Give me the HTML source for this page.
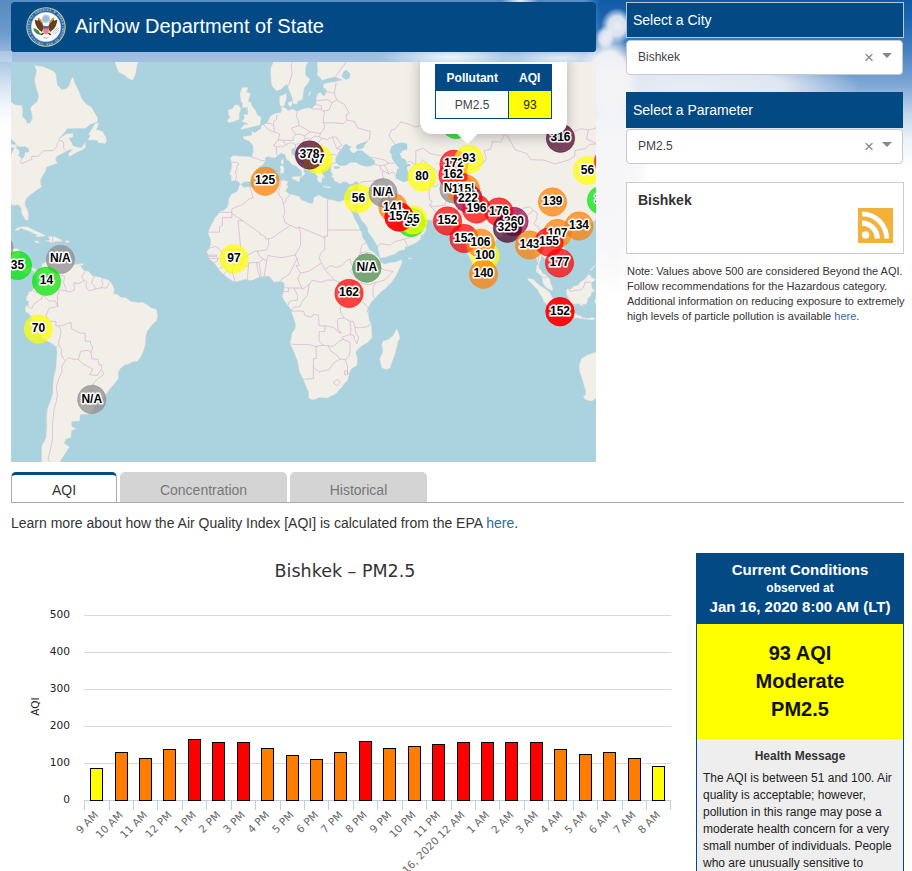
<!DOCTYPE html>
<html lang="en">
<head>
<meta charset="utf-8">
<title>AirNow Department of State</title>
<style>
*{box-sizing:border-box;margin:0;padding:0}
html,body{width:912px;height:871px;overflow:hidden;background:#fff}
body{position:relative;font-family:"Liberation Sans",Arial,sans-serif;color:#333;font-size:14px}
.abs{position:absolute}
#sky{left:0;top:0;width:912px;height:470px;
 background:
  radial-gradient(ellipse 16px 18px at 617px 26px,rgba(244,244,247,.95) 0,rgba(244,244,247,.85) 55%,rgba(244,244,247,0) 100%),
  radial-gradient(ellipse 10px 12px at 605px 38px,rgba(244,244,247,.95) 0,rgba(244,244,247,.8) 55%,rgba(244,244,247,0) 100%),
  radial-gradient(ellipse 30px 44px at 609px 78px,rgba(244,244,247,1) 0,rgba(244,244,247,.95) 60%,rgba(244,244,247,0) 100%),
  radial-gradient(ellipse 40px 120px at 611px 180px,rgba(246,246,248,1) 0,rgba(246,246,248,.9) 60%,rgba(246,246,248,0) 100%),
  radial-gradient(ellipse 170px 34px at 690px 86px,rgba(232,237,245,1) 0,rgba(232,237,245,.9) 55%,rgba(232,237,245,0) 100%),
  radial-gradient(ellipse 70px 12px at 450px 57px,rgba(255,255,255,.85),rgba(255,255,255,0)),
  radial-gradient(ellipse 60px 10px at 560px 58px,rgba(255,255,255,.7),rgba(255,255,255,0)),
  radial-gradient(ellipse 18px 5px at 520px 1px,rgba(255,255,255,.9),rgba(255,255,255,0)),
  linear-gradient(to bottom,rgba(255,255,255,0) 0,rgba(255,255,255,0) 35px,rgba(255,255,255,.75) 105px,#fff 135px) 0 0/12px 100% no-repeat,
  linear-gradient(rgba(255,255,255,.22),rgba(255,255,255,.22)) 0 51px/596px 11px no-repeat,
  linear-gradient(to right,rgba(255,255,255,.3) 0,rgba(255,255,255,.3) 585px,rgba(255,255,255,0) 600px),
  linear-gradient(to bottom,#105aa6 0,#1b65b0 18px,#4580c0 50px,#7fa8d6 85px,#c4d8ec 115px,#edf3f9 140px,#fff 170px);}
#hdr{left:11px;top:2px;width:585px;height:50px;background:#034a85;border-radius:4px 4px 3px 3px;color:#fff}
#hdr .t{left:64px;top:11px;font-size:20px;line-height:26px;white-space:nowrap}
#map{left:11px;top:62px;width:585px;height:400px;background:#aad3df;overflow:hidden}
.ph{left:626px;width:278px;height:36px;background:#034a85;color:#fff;font-size:14px;line-height:35px;padding-left:6px;border:1px solid #034a85}
.ph.f{border-color:rgba(255,255,255,.7)}
.sel{left:626px;width:277px;height:35px;background:#fff;border:1px solid #c8c8c8;border-radius:4px;font-size:12px;line-height:33px;padding-left:11px;color:#444}
.sel .x{position:absolute;left:237px;top:0;font-size:17px;color:#888;font-weight:normal}
.sel .c{position:absolute;left:255px;top:12px;width:0;height:0;border:5px solid transparent;border-top:5px solid #888;border-bottom:0}
#city{left:626px;top:182px;width:278px;height:72px;background:#fff;border:1px solid #ccc}
#city b{position:absolute;left:11px;top:9px;font-size:14px;color:#333}
#note{left:627px;top:264px;width:285px;font-size:11px;line-height:15px;color:#333;white-space:nowrap}
a{color:#2f6aa3;text-decoration:none}
.tab{top:472px;height:30px;font-size:14px;line-height:36px;text-align:center;border-radius:5px 5px 0 0}
#t1{left:11px;width:106px;background:#fff;border:1px solid #aaa;border-top:3px solid #034a85;border-bottom:0;color:#333;line-height:30px;height:31px}
#t2{left:120px;width:167px;background:#d4d4d4;color:#777}
#t3{left:290px;width:137px;background:#d4d4d4;color:#777}
#tline{left:11px;top:502px;width:893px;height:1px;background:#aaa}
#learn{left:11px;top:514px;font-size:14px;line-height:18px;color:#333;white-space:nowrap}
#cc{left:696px;top:553px;width:208px;height:330px;background:#eee;border:1px solid #034a85;border-bottom:0}
#cc .h{left:0;top:0;width:206px;height:70px;background:#034a85;color:#fff;text-align:center;font-weight:bold}
#cc .y{left:0;top:70px;width:206px;height:115px;background:#ff0;color:#111;text-align:center;font-weight:bold;font-size:20px;line-height:28px;padding-top:15px}
#cc .hm{left:0;top:194px;width:206px;text-align:center;font-weight:bold;font-size:12px;line-height:16px;color:#333}
#cc .p{left:6px;top:216px;width:200px;font-size:12px;line-height:17px;color:#222;white-space:nowrap}
#pop{left:409px;top:-12px;width:147px;height:84px;background:#fff;border-radius:12px;box-shadow:0 3px 14px rgba(0,0,0,.25)}
#pop .tip{left:40px;top:76px;width:15px;height:15px;background:#fff;transform:rotate(45deg);transform-origin:50% 50%}
#pop table{position:absolute;left:15px;top:13.8px;border:1px solid #034a85;border-collapse:collapse;font-size:12px;table-layout:fixed}
#pop th{background:#034a85;color:#fff;font-size:12px;height:27px;font-weight:bold;text-align:center;padding:0}
#pop td{height:27px;text-align:center;color:#444;padding:0}
</style>
</head>
<body>
<div id="sky" class="abs"></div>

<div id="hdr" class="abs">
<svg class="abs" style="left:15px;top:4.700px" width="40" height="40" viewBox="0 0 40 40">
<defs><path id="ringt" d="M20 36.300A16.300 16.300 0 1 1 20.010 36.300"/></defs>
<circle cx="20" cy="20" r="19.700" fill="#c9d78c"/>
<circle cx="20" cy="20" r="18.700" fill="#2c66b4"/>
<circle cx="20" cy="20" r="14.800" fill="#fff" stroke="#c9d78c" stroke-width=".5"/>
<text font-family="Liberation Sans,Arial,sans-serif" font-size="2.800" font-weight="bold" fill="#dfe8f5" fill-opacity=".8" letter-spacing=".55"><textPath href="#ringt" startOffset="3">UNITED STATES OF AMERICA ★ DEPARTMENT OF STATE ★</textPath></text>
<circle cx="20" cy="11.800" r="4.300" fill="#b7cfe6"/>
<circle cx="20" cy="11.800" r="2.900" fill="#9dbcdc"/>
<path d="M8.800 12.500c.3 6 2.700 10 7.200 12.500l2.200-5.500c-1.500-1.500-2.300-3.500-2.800-6l-2.800-3-.8 3.300z" fill="#6a3d1c"/>
<path d="M31.200 12.500c-.3 6-2.700 10-7.200 12.500l-2.200-5.500c1.500-1.500 2.300-3.500 2.800-6l2.800-3 .8 3.300z" fill="#6a3d1c"/>
<path d="M12 11l5 5.500M28 11l-5 5.500" stroke="#c9a24a" stroke-width="1.300"/>
<path d="M18.600 16.300q1.400-1.400 2.800 0l.3 2.200h-3.400z" fill="#f4f1e6"/>
<path d="M16.800 25.500l-2.300 2.200 1.200.6 2.300-1.600zM23.200 25.500l2.300 2.200-1.200.6-2.300-1.600z" fill="#3a2412"/>
<path d="M17.200 19.200h5.600v5.200q0 2.200-2.800 3.200-2.800-1-2.800-3.200z" fill="#ee8080"/>
<path d="M17.200 19.200h5.600v2.300h-5.600z" fill="#3b5fb4"/>
<path d="M17 29.500q3 1.600 6 0l-.6 1.800q-2.400 1-4.800 0z" fill="#c8c8d0"/>
<path d="M7.500 21.500q2-1 3.300 1.200 2.200.3 2.500 2.600 1.800 1 2 3l-2.300-.8q-2.800-.3-4-2.600-1.800-1.200-1.500-3.400z" fill="#3f8f3f"/>
<path d="M32.500 21.500l-5 5.500M31.500 20.500l-5.500 5.500M33 23l-4.500 4.500" stroke="#b9b9b9" stroke-width=".8"/>
</svg>
<div class="t abs">AirNow Department of State</div>
</div>

<div id="map" class="abs">
<svg class="abs" style="left:0;top:0" width="585" height="400" viewBox="0 0 585 400">
<rect width="585" height="400" fill="#aad3df"/>
<path d="M-16.2 34.0L-4.8 36.6L3.7 42.7L10.8 43.7L11.7 49.1L11.4 54.3L15.1 58.5L16.5 61.8L19.4 60.8L21.4 56.2L20.8 51.5L19.4 46.7L20.8 44.2L26.5 39.2L27.9 34.0L25.1 26.0L23.6 17.7L25.6 8.9L23.6 3.5L32.2 4.7L40.7 8.3L44.7 11.3L45.5 17.7L46.4 23.3L50.7 27.6L54.9 27.1L57.8 24.4L59.8 18.8L61.2 15.4L62.3 16.0L63.5 20.5L67.7 28.7L70.6 36.6L74.8 41.7L80.5 45.2L83.4 50.5L86.8 56.2L86.2 59.9L79.1 62.2L74.8 66.3L66.3 66.3L56.3 66.7L52.1 72.0L46.4 78.4L49.2 76.3L54.9 72.0L62.0 71.5L62.0 75.0L57.8 76.3L60.6 80.5L62.0 83.8L64.9 85.0L70.6 85.8L74.0 80.5L74.8 85.0L72.0 87.4L66.3 89.9L62.0 92.6L58.6 94.6L57.2 91.5L62.0 87.4L57.8 87.9L54.9 89.5L49.2 92.6L45.5 94.6L44.4 98.1L46.4 101.2L42.1 102.7L35.6 105.0L35.0 106.5L34.4 109.8L32.2 112.4L30.7 115.6L29.3 118.9L29.9 122.4L30.7 124.9L27.3 126.9L23.6 129.7L20.2 132.1L15.7 136.1L14.0 140.1L14.2 143.4L16.5 148.3L17.7 153.1L17.1 157.9L14.8 158.2L12.8 155.0L10.3 150.2L10.3 146.0L7.4 142.8L5.1 142.8L2.3 143.4L-0.5 141.5L-4.8 141.8L-16.2 142.8ZM76.8 78.0L79.1 74.1L77.7 72.0L81.9 65.4L83.9 61.8L87.6 60.8L86.5 65.4L84.8 67.6L87.6 68.0L91.9 69.8L93.3 72.8L94.7 75.0L95.6 78.4L94.2 81.7L91.9 80.9L87.6 80.9L86.2 78.4L81.9 78.0ZM97.6 -20.1L103.3 -3.4L104.7 2.9L107.5 10.1L113.2 13.1L117.5 16.5L121.8 18.2L124.6 11.9L126.0 2.9L128.9 -3.4L134.6 -20.1ZM3.7 168.4L6.6 165.7L10.8 164.7L16.5 164.7L20.8 166.9L25.1 169.0L29.3 170.9L34.4 173.3L32.2 174.5L24.5 174.7L26.5 172.7L22.2 171.2L17.9 169.0L12.8 167.5L10.0 166.3L6.6 168.4ZM33.9 179.0L37.9 179.6L41.6 180.8L45.0 179.3L50.7 179.6L50.9 178.1L47.0 176.3L44.1 174.8L38.4 174.5L37.0 175.1L39.3 178.1ZM22.8 179.3L26.5 178.7L28.8 180.2L25.9 181.0ZM54.4 178.7L58.9 179.0L58.3 180.2L54.4 180.4ZM-16.2 186.2L-4.8 186.8L0.9 186.5L6.6 186.8L8.8 189.1L8.0 195.0L7.4 200.8L9.4 203.7L11.7 206.0L15.1 207.2L18.2 205.4L20.8 205.2L25.3 207.5L27.0 209.5L30.5 205.2L31.3 201.7L34.4 200.2L39.8 197.9L42.7 196.8L41.0 199.4L42.4 201.1L45.8 199.4L47.0 197.3L50.7 199.9L52.1 202.0L57.8 202.0L62.0 202.8L69.1 201.7L69.4 203.7L72.3 208.0L77.7 209.5L81.9 214.3L89.1 215.2L97.6 218.3L99.9 220.3L103.3 227.2L102.4 231.7L107.5 232.9L109.0 235.1L114.7 235.7L119.5 239.4L127.5 240.6L131.7 240.3L136.0 242.8L140.3 246.0L145.1 247.1L146.5 252.3L145.9 258.0L140.3 263.8L136.0 269.6L134.6 275.5L134.3 282.9L132.3 289.2L129.2 295.9L126.0 299.4L122.6 299.6L117.5 302.0L113.5 303.0L109.0 306.7L107.3 310.5L107.3 316.6L103.3 321.8L99.0 326.8L97.0 329.5L93.6 334.6L89.3 338.5L85.6 338.3L80.5 335.2L79.4 337.3L83.1 340.4L84.2 344.0L81.4 349.7L77.7 351.9L69.1 352.6L68.6 358.9L60.6 359.6L60.6 364.2L64.6 366.9L60.6 368.4L59.8 375.5L54.9 377.2L53.2 381.2L58.3 385.0L53.5 392.6L49.2 399.2L50.9 407.4L50.9 420.4L32.2 420.4L30.7 397.0L30.7 384.1L35.0 375.9L35.9 364.2L35.6 356.6L36.4 346.4L39.0 340.4L41.8 331.8L42.1 321.8L42.7 315.3L45.0 307.0L45.3 301.1L46.1 290.4L45.5 285.3L42.1 282.3L36.4 279.0L31.6 276.3L28.5 272.2L25.9 266.7L23.1 260.9L20.8 255.4L18.2 252.0L14.5 249.4L14.2 245.7L17.1 242.0L18.2 239.4L15.4 238.6L15.4 235.1L17.7 232.0L17.9 230.0L21.1 228.9L21.4 227.2L24.8 224.9L26.2 221.2L25.1 216.6L23.9 211.8L22.5 208.9L19.4 206.9L16.8 208.9L17.9 211.2L15.1 211.8L13.1 209.5L9.7 208.9L7.7 207.2L3.7 203.7L1.4 202.3L1.7 200.2L-2.0 195.9L-4.8 194.4L-16.2 193.5ZM229.3 67.4L235.5 66.3L242.7 64.5L249.2 62.7L250.1 55.3L246.1 52.9L244.9 49.1L241.2 44.2L239.8 40.2L237.0 39.2L239.8 31.4L235.5 30.3L237.0 25.5L231.3 25.5L229.0 31.4L229.9 39.2L231.8 41.7L231.3 45.7L236.4 45.2L237.0 50.1L236.7 52.4L232.7 52.4L233.6 56.2L230.7 59.5L236.4 61.3L237.0 62.2L233.3 62.7ZM228.4 57.6L228.1 52.4L229.9 47.1L227.9 43.2L224.2 42.7L221.3 46.7L217.1 48.1L217.6 52.4L219.0 55.3L216.2 58.5L217.9 60.8L222.7 59.5L227.3 57.8ZM259.7 5.9L259.7 11.9L260.3 20.5L261.4 24.4L265.4 28.7L269.7 27.6L275.4 22.2L276.8 23.3L277.6 27.1L279.6 31.4L281.9 38.1L282.2 41.7L285.9 42.2L286.7 39.2L291.0 38.1L292.4 31.4L293.0 26.0L296.7 21.6L299.0 17.1L294.7 13.6L294.4 7.7L295.3 2.9L298.1 -1.5L302.4 -4.7L305.2 -9.9L305.2 -27.2L259.7 -27.2L262.6 -0.2ZM316.6 -27.2L316.6 -13.2L313.8 -9.9L309.5 -3.4L306.1 1.0L306.7 8.9L306.1 13.1L309.5 16.0L310.9 18.2L316.6 16.5L323.7 14.8L328.0 16.5L331.4 18.0L325.1 19.4L319.5 20.5L315.8 21.1L312.3 22.2L312.6 26.0L315.2 27.1L314.6 32.4L312.3 34.0L309.5 30.3L306.7 31.9L305.2 36.6L305.2 42.7L302.4 44.7L301.0 47.1L298.1 45.7L292.4 46.7L286.2 49.6L281.1 47.1L276.8 49.1L276.2 47.6L273.9 45.7L272.5 44.2L273.9 41.7L275.4 36.6L275.4 30.9L272.5 33.0L268.8 34.0L268.5 39.2L269.1 43.2L270.2 44.7L270.8 49.1L269.1 51.0L265.4 51.0L263.1 52.0L259.2 54.3L257.7 58.1L255.5 61.3L252.6 62.7L250.1 64.0L250.1 66.7L246.1 68.9L244.9 70.7L242.1 70.2L240.9 68.9L240.9 73.3L237.8 73.7L232.1 74.6L233.0 77.1L238.4 79.2L242.1 83.8L242.1 90.3L240.9 95.0L234.7 94.6L229.0 94.2L222.7 93.6L219.3 95.8L220.5 100.0L220.8 104.2L218.8 112.6L220.5 113.8L220.2 118.9L224.5 118.2L227.3 119.6L229.6 122.4L233.0 119.9L239.2 119.6L243.5 116.7L246.1 112.6L244.6 109.8L248.1 105.0L251.8 102.7L254.6 99.3L254.0 95.8L256.9 94.6L260.9 95.4L264.3 95.8L266.8 93.4L270.5 91.1L274.5 93.0L275.4 97.0L279.1 100.0L281.3 102.7L284.5 103.5L286.2 105.0L288.2 107.2L290.2 108.0L291.0 111.7L290.2 115.3L292.4 113.5L294.1 111.7L292.4 109.1L293.6 106.5L296.7 108.3L298.1 107.2L293.9 104.2L291.0 102.3L291.6 100.8L288.2 100.4L285.3 97.3L283.9 94.2L280.8 91.9L280.5 87.0L284.5 85.8L284.2 88.7L286.7 87.4L288.7 91.9L292.4 94.6L296.7 98.1L300.7 100.8L301.0 105.4L302.4 109.1L305.2 112.7L305.5 114.2L307.2 114.2L306.1 116.4L307.2 119.6L309.2 120.6L310.9 120.6L310.9 117.4L311.5 115.3L313.8 116.4L312.3 113.1L310.4 110.6L310.6 106.5L312.9 108.0L314.9 106.8L314.9 104.6L319.5 105.0L320.0 107.2L320.0 109.8L321.7 112.7L320.3 114.2L322.9 116.4L323.2 118.9L325.7 119.9L329.4 121.7L332.5 119.6L336.5 120.6L338.8 122.4L342.2 121.4L343.9 119.6L347.3 120.3L347.9 122.4L347.3 124.9L347.6 127.6L346.5 129.7L345.1 133.4L343.6 137.8L342.8 138.5L340.8 139.1L337.4 138.6L333.7 137.8L330.8 138.8L328.0 140.0L323.2 138.3L317.2 137.5L312.3 135.5L308.1 133.1L302.7 135.5L302.4 139.5L302.1 141.1L299.5 141.8L295.3 139.8L289.9 137.8L288.7 134.8L283.0 133.1L278.2 132.1L276.5 130.4L274.2 128.7L275.9 126.6L277.1 124.9L275.7 122.4L277.1 118.9L274.5 119.2L273.4 117.8L269.7 119.0L265.4 118.9L259.7 119.6L254.0 119.6L248.3 120.6L243.8 123.5L239.8 125.6L237.0 124.9L232.7 125.2L230.3 122.8L228.7 123.1L227.6 125.9L226.2 129.4L223.9 130.7L221.0 132.1L219.0 134.5L217.6 137.8L217.6 141.1L216.5 145.1L212.8 148.6L208.8 149.6L207.1 152.5L204.3 155.4L200.3 162.9L197.1 170.0L197.1 171.8L199.1 175.7L200.0 180.2L198.6 186.2L195.7 190.0L197.7 193.5L198.0 196.8L201.4 199.4L204.3 202.3L206.5 205.2L208.0 208.0L212.8 212.6L214.8 214.3L219.9 218.1L224.2 219.9L231.3 218.1L234.1 217.2L239.8 218.6L245.5 216.3L248.9 214.9L252.3 214.2L255.2 214.1L258.3 214.6L261.1 217.5L262.6 220.1L265.4 219.8L269.1 219.2L270.8 219.5L273.1 220.9L273.4 225.2L272.8 229.5L272.2 231.2L271.1 234.3L273.4 238.8L276.8 243.4L279.1 246.0L280.5 249.4L283.0 257.4L284.8 262.9L283.6 267.8L281.1 271.1L280.2 276.1L279.1 282.0L281.9 287.4L286.7 299.2L288.7 310.8L292.4 317.3L294.7 323.5L297.6 330.1L297.8 334.9L298.1 336.4L302.4 338.0L308.4 335.6L316.0 335.9L318.3 335.1L324.9 331.8L330.8 325.1L333.7 321.3L336.8 317.9L339.1 308.9L340.8 306.4L345.9 303.3L346.5 296.5L345.1 291.9L344.5 289.9L350.5 284.1L356.4 280.8L361.0 275.5L360.7 268.1L360.4 262.3L358.1 258.0L357.3 251.7L355.9 249.4L357.0 245.7L358.4 243.8L359.8 240.6L363.5 237.1L366.4 233.4L370.7 229.2L374.4 226.5L380.6 220.3L384.9 213.8L387.7 208.0L390.0 202.8L391.4 198.5L390.0 198.1L384.9 199.9L379.2 200.5L373.5 202.3L368.7 199.4L368.1 195.9L365.8 193.5L362.1 189.7L358.4 187.7L356.4 183.2L354.7 179.9L351.6 175.4L350.7 170.6L348.5 166.6L346.8 162.3L343.9 157.2L341.9 152.5L339.9 148.3L338.2 143.1L338.5 144.1L339.9 147.3L341.1 148.6L342.9 150.1L343.3 148.6L344.2 146.0L344.9 144.4L344.5 147.7L345.6 149.3L346.5 150.9L349.3 155.7L351.3 159.4L353.6 161.6L356.7 166.3L357.0 169.7L359.8 173.6L362.4 177.2L365.0 181.7L366.7 184.7L367.5 189.1L368.7 194.1L369.2 195.9L373.5 195.6L379.2 193.5L384.0 192.1L387.7 189.1L394.0 187.4L394.0 185.3L397.7 184.1L399.4 183.2L402.8 181.7L405.9 180.2L409.6 177.2L409.9 173.3L412.5 172.7L415.6 166.6L412.2 163.2L407.6 161.3L405.6 158.8L405.9 154.6L404.8 155.7L402.8 157.9L400.2 160.4L396.3 161.6L392.3 161.3L392.3 157.9L391.4 155.4L390.0 157.2L389.7 159.1L388.3 156.6L388.0 153.8L386.6 151.5L384.3 149.9L383.2 147.0L382.0 144.7L383.7 142.8L386.3 142.1L388.3 142.8L390.0 146.4L392.0 149.6L395.1 151.2L400.5 153.8L405.6 151.8L407.6 153.1L408.5 156.6L412.8 157.2L417.9 157.9L420.7 158.2L422.7 158.3L429.0 157.9L434.7 157.6L436.1 159.4L437.5 162.6L440.3 164.1L441.8 166.9L444.6 165.4L441.8 167.5L442.3 170.9L446.0 172.1L450.3 171.2L451.7 168.7L452.6 171.2L452.6 177.2L454.0 183.2L455.4 187.7L457.4 193.5L458.5 195.3L461.1 200.2L462.5 204.0L464.5 208.6L466.1 209.2L467.9 206.9L470.2 205.7L472.5 202.8L472.6 198.2L473.9 194.7L473.3 188.3L475.9 186.8L479.6 184.4L482.4 181.1L487.3 176.3L491.5 173.6L493.0 170.3L496.4 169.0L500.1 168.7L502.9 167.2L506.6 167.2L508.0 172.1L509.7 173.9L513.7 178.7L514.3 185.6L516.6 186.8L519.1 184.7L522.0 183.8L523.1 184.7L523.7 189.1L524.8 193.5L526.0 197.9L526.2 202.3L525.1 208.0L525.1 209.8L528.5 212.3L530.8 215.2L531.1 216.9L531.9 220.9L533.9 224.3L536.2 226.0L539.9 228.6L541.9 228.3L541.3 225.2L539.6 221.5L538.8 217.2L536.2 214.6L534.2 212.6L531.7 211.8L529.9 208.0L528.0 206.0L527.7 202.3L529.4 198.5L529.9 195.6L531.4 193.5L532.8 195.9L536.2 197.3L538.5 200.8L540.2 202.3L542.7 202.6L543.9 207.7L545.6 206.6L549.3 202.6L552.7 200.8L556.1 199.1L556.4 195.0L555.0 188.3L553.3 185.9L549.9 183.2L547.0 178.7L546.4 175.7L549.0 172.1L552.7 169.7L557.0 169.7L557.5 171.5L559.2 173.3L559.8 170.6L563.5 169.4L568.3 167.5L570.3 167.2L574.0 166.0L577.4 164.1L581.4 160.4L585.4 157.2L586.0 154.1L588.8 149.3L592.0 144.4L603.9 146.0L603.9 -27.2ZM554.7 176.6L557.0 174.2L560.4 173.9L561.2 175.4L559.8 177.8L557.3 179.6L554.7 178.7ZM472.8 204.3L475.3 205.7L476.8 208.0L478.5 211.5L477.9 214.1L474.8 215.3L473.1 214.3L472.6 212.3L472.5 208.9ZM516.6 216.3L522.8 217.5L525.1 220.3L527.7 222.6L531.1 225.2L534.2 226.9L538.5 230.3L540.8 234.6L542.7 237.4L544.2 238.8L547.0 240.8L546.7 245.1L546.4 248.8L544.2 248.8L542.7 248.3L539.9 246.0L536.5 243.4L532.8 239.4L531.1 235.1L528.5 231.7L526.5 227.5L523.7 224.9L520.8 221.8L517.1 218.1ZM544.7 251.7L547.0 249.1L549.3 249.5L553.6 250.3L555.0 251.7L559.5 252.1L561.2 250.7L565.8 252.0L566.4 253.1L570.9 254.3L571.2 256.9L566.9 256.1L561.2 255.8L555.5 254.4L552.7 254.6L548.4 253.4ZM571.2 255.4L574.6 255.7L574.0 257.4L571.5 256.6ZM575.5 256.0L577.4 256.1L577.2 257.7L575.5 257.6ZM577.7 256.3L581.1 255.4L584.3 256.3L584.0 257.4L579.7 258.0L577.7 257.7ZM555.5 228.0L556.4 226.6L559.2 227.5L562.1 225.5L562.4 224.3L566.9 223.2L569.8 219.5L572.6 218.1L575.5 215.2L577.7 212.3L579.7 213.8L580.3 215.2L584.6 217.2L582.6 219.5L580.6 220.3L580.3 222.3L581.1 226.0L584.0 229.5L580.9 230.0L579.7 233.7L576.9 236.6L576.3 239.4L575.5 242.3L571.5 242.3L571.5 244.0L566.9 241.4L563.5 242.3L559.0 240.6L558.7 237.4L556.1 233.7L555.5 230.9ZM585.1 248.0L585.4 242.3L583.4 240.3L584.8 235.7L586.3 231.4L589.7 228.6L603.9 228.0L603.9 248.0ZM578.9 208.3L581.1 206.0L584.8 202.0L585.4 199.7L584.6 202.8L582.0 206.6L579.7 208.6ZM570.3 296.5L568.9 301.1L568.1 304.2L568.6 309.6L570.3 313.7L571.5 317.9L572.6 321.8L574.6 328.5L574.6 332.9L572.6 333.9L572.9 336.3L577.4 338.7L581.1 339.0L586.8 334.9L603.9 333.5L603.9 287.4L591.1 287.4L584.0 290.4L578.3 292.2L575.5 293.4L572.6 295.2ZM385.7 266.7L387.7 271.1L389.1 276.6L387.2 278.4L386.0 284.4L383.5 293.4L380.6 301.1L379.2 305.8L374.9 307.4L370.7 305.8L369.5 300.8L368.7 296.5L371.5 291.0L371.8 287.4L370.7 282.9L372.1 279.0L377.2 277.5L381.5 274.0L383.5 271.1ZM281.1 115.3L283.3 114.6L289.9 114.2L288.5 117.8L288.5 119.9L285.3 118.5L281.1 116.4ZM268.8 104.2L271.7 103.5L273.1 106.1L272.8 110.9L271.1 111.3L269.4 111.7L269.4 106.8ZM270.0 98.9L272.2 96.6L272.5 100.4L271.7 102.7L270.2 101.2ZM312.6 123.8L314.6 124.5L318.6 124.7L320.3 125.2L318.0 126.1L313.8 125.4L312.3 124.9ZM337.4 125.7L339.4 124.7L343.9 123.5L342.2 125.9L339.4 127.3L337.7 126.8ZM252.3 109.4L254.3 108.2L255.2 109.4L254.0 110.6ZM276.8 40.7L281.1 38.7L281.3 42.2L279.6 44.7L277.4 43.2ZM297.3 34.0L299.0 29.3L299.8 29.8L298.7 33.0ZM69.4 201.7L72.3 201.4L72.0 203.4L69.4 203.4ZM397.1 196.2L400.5 196.2L400.2 197.0L397.4 197.0ZM357.0 248.8L357.6 248.8L357.9 250.5L357.3 250.5Z" fill="#f2efe9" stroke="#e3d9d3" stroke-width=".4"/>
<path d="M239.2 125.6L240.7 131.1L242.1 135.5L237.0 137.5L235.0 139.8L231.3 142.8L227.0 144.1L220.8 147.0L220.8 151.5M220.8 150.3L208.0 150.3M220.8 151.5L220.8 155.7L211.4 155.7L211.4 163.5L208.5 165.0L208.5 170.2L197.1 170.2M220.8 151.5L231.8 158.8L248.8 170.9L248.9 172.1L254.6 174.8L254.6 176.9L257.6 176.8L262.0 175.7L266.8 171.8L279.6 163.5L273.9 160.4L272.5 154.7L273.7 150.9L273.4 146.0L272.5 142.1L271.1 136.1L269.1 134.5L266.8 130.0L268.8 126.9L269.1 122.4L270.0 119.2M272.5 142.1L274.8 139.5L274.8 136.8L278.2 134.5L278.2 132.1M316.6 137.5L316.6 168.1L350.5 168.1M279.6 163.5L285.9 166.3L288.2 165.0L313.8 175.7L313.8 174.2L316.6 174.2L316.6 168.1M231.8 158.8L227.0 158.8L229.9 187.7L219.0 187.7L214.5 188.8L212.8 187.4L210.8 189.7L207.4 186.2L204.3 184.4L198.6 186.2M210.8 189.7L213.1 196.8L206.5 196.2L198.0 196.8M197.7 193.2L205.7 193.2L205.7 194.4L197.7 194.7M213.1 196.8L219.0 196.8L222.2 200.8L222.7 203.1L221.3 210.6L224.2 219.9M207.7 206.6L214.2 203.7L216.2 208.0L218.8 211.2L221.3 210.6M216.2 208.0L212.8 212.6M202.8 200.8L206.5 198.8L206.5 196.2M222.7 203.1L227.9 202.0L229.9 202.6L232.7 196.5L237.0 193.0L244.1 189.1L246.1 189.1L248.1 193.5L251.8 196.8L255.7 198.8M229.9 202.6L237.5 204.6L236.4 215.2L236.7 217.8M237.5 204.6L237.5 200.8L245.5 200.5L246.9 209.5L248.9 214.9M245.5 200.5L248.1 200.8L250.1 214.3M248.1 200.8L251.8 196.8M255.7 198.8L253.2 214.1M246.1 189.1L255.5 188.0L257.6 183.5L257.6 176.8M255.7 198.8L256.9 193.5L265.4 195.0L271.1 195.6L284.2 193.0L289.6 183.5L289.6 172.7L288.2 165.0M284.2 193.0L285.9 196.5L282.5 203.7L278.2 212.3L271.1 216.6L269.7 218.9M285.9 196.5L288.2 203.7L284.8 203.7L289.6 210.9L286.7 216.6L291.0 226.0M313.8 175.7L313.8 187.1L309.5 192.1L308.1 195.9L310.6 201.1L305.2 204.3L298.4 209.2L289.6 210.9M273.4 225.8L283.0 226.0L291.0 226.0L291.6 227.5L298.4 222.3M273.4 229.5L277.6 229.5L277.6 226.0M283.0 226.0L286.7 233.7L286.5 238.0L278.5 239.4L277.1 243.4M298.4 222.3L296.1 233.7L291.6 238.6L289.0 244.5L282.5 245.4L280.2 248.8M298.4 222.3L301.0 218.1L309.5 220.3L316.6 218.1L323.4 218.1L333.1 222.3M310.6 201.1L313.8 207.5L323.4 218.1M313.8 207.5L319.5 203.7L325.1 205.4L330.8 203.7L336.5 197.9L339.4 197.3L339.9 201.7L342.2 205.2M342.2 205.2L343.1 201.7L345.1 198.5L348.2 195.9L349.0 191.2L350.7 183.2L355.3 180.2M349.0 191.2L353.6 190.0L359.3 190.6L366.1 196.5L364.4 200.8L367.8 200.8L367.8 205.2L373.5 208.0L382.0 209.5L373.5 218.1L365.0 220.3L357.9 222.6L353.6 222.1L347.9 219.8L347.6 219.2M368.4 199.4L366.1 196.5M342.2 205.2L339.4 209.5L347.6 219.2L342.2 220.3L333.7 221.8L333.1 222.3L334.5 226.3L330.0 230.6L329.7 236.3M342.2 220.3L345.1 227.5L342.2 231.7L341.9 235.1L352.5 240.8L357.0 245.7M365.0 220.3L362.1 224.3L362.1 234.6L363.8 237.1M332.3 235.1L341.9 235.1M329.7 236.3L333.1 235.1L333.1 239.1L332.0 240.8L333.1 241.7L329.1 244.8L329.7 250.8L333.1 256.0M328.6 240.0L333.1 239.1M333.1 256.0L339.1 259.2L342.2 259.4L343.9 265.5L349.3 265.8L355.0 264.9L360.4 262.3M333.1 256.0L327.7 256.6L326.3 258.9L327.1 268.1L330.3 270.8L328.0 270.8L322.9 265.5L317.5 264.4L313.8 263.8L313.8 269.6L308.1 269.6L308.1 279.0L312.1 283.2M280.2 248.8L282.5 249.1L292.7 249.1L293.9 253.7L300.7 255.1L302.4 252.3L307.5 253.1L308.1 263.8L313.8 263.8M279.1 282.0L285.3 282.6L298.1 282.6L305.2 284.4L312.1 283.2L317.2 283.8M305.2 284.4L305.2 296.5L302.4 296.5L302.4 305.2L302.4 316.6L292.4 317.3M302.4 305.2L308.1 309.9L318.0 307.7L322.3 301.4L329.1 297.1L334.5 297.7M317.2 283.8L319.5 288.9L324.3 291.9L329.1 297.1M317.2 283.8L322.3 284.4L327.4 279.9L332.0 277.2L339.1 280.5L339.1 288.9L337.9 294.3L334.5 297.7L336.5 304.2L336.5 311.5L339.1 311.8M322.3 320.5L326.6 317.3L329.1 320.2L326.0 323.8L322.3 320.5M333.7 308.9L336.5 308.9L336.5 312.8L333.7 312.8L333.7 308.9M332.0 277.2L331.4 274.9L339.4 272.5L339.9 268.1L339.1 259.2M343.9 265.5L344.8 271.1L347.6 275.2L345.9 281.7L343.1 276.9L343.3 274.0L339.4 272.5M42.7 197.9L39.3 200.8L37.9 206.0L39.6 208.6L40.7 212.3L46.4 212.3L53.5 214.6L52.6 220.9L54.9 226.6L54.9 228.9L46.4 227.5L48.1 230.6L46.4 232.9L46.7 244.3M46.7 244.3L44.1 238.8L37.9 239.1L31.3 232.6L26.5 231.4L21.4 228.3M31.3 232.6L30.7 236.6L22.8 242.0L20.8 246.5L17.1 244.8L17.1 242.0M46.7 244.3L37.9 246.5L35.0 253.7L38.4 259.2L45.0 259.4L44.7 263.8L47.5 263.8L50.1 268.1L49.2 275.5L47.8 278.4L47.8 282.9L45.3 285.3M47.5 263.8L50.7 263.8L59.8 260.3L60.6 266.7L69.1 271.1L74.3 271.4L74.3 279.3L79.7 279.3L79.4 282.3L81.9 284.4L81.1 287.4L80.0 290.4L77.4 288.3L69.7 289.2L67.4 297.4L62.0 297.1L60.0 296.5L56.9 295.9L54.4 298.9M47.8 282.9L50.7 287.4L50.1 291.9L52.4 296.5L54.4 298.9L50.9 304.2L50.7 310.5L47.0 318.6L45.3 325.1L46.4 332.9L45.0 340.4L43.0 347.5L42.1 356.6L41.3 366.1L41.6 375.9L39.8 386.2L37.0 397.0L39.8 401.5L40.7 406.1L50.7 407.4M67.4 297.4L72.0 302.0L80.5 306.4L81.7 307.0L78.8 312.8L86.2 313.4L90.2 307.7M80.0 290.4L80.8 296.8L87.1 297.4L87.9 302.7L91.0 303.0L90.2 307.7L92.5 311.2L92.5 312.8L86.8 316.6L81.7 322.5L80.0 330.1L79.4 335.2M81.7 322.5L86.2 324.8L91.9 328.1L93.6 334.2M54.9 228.9L59.2 230.0L63.5 228.0L62.9 220.6L66.9 221.8L72.0 219.5L72.8 217.5L70.9 215.5L71.4 213.5L74.8 208.0M72.8 217.5L75.1 219.8L75.4 225.8L78.2 228.9L84.8 226.9L82.5 222.9L80.5 220.9L82.8 215.2M84.8 226.9L90.2 225.8L91.9 222.1L90.8 218.1L91.9 215.8M90.2 225.8L95.6 226.0L98.7 220.3M-16.2 74.6L-6.2 75.0L4.3 82.5L8.0 84.6L10.8 87.4L11.1 96.6L9.1 100.4L10.3 101.6L20.8 97.3L20.5 94.6L27.0 94.2L33.0 88.7L42.1 88.7L45.5 85.0L46.4 81.7L48.7 78.6L51.2 79.0L52.6 80.1L52.6 85.8L54.6 88.3M-2.8 195.0L0.9 192.7L3.7 190.3L8.8 189.1M1.7 200.5L7.4 201.1M9.7 208.9L10.5 204.9M23.9 211.8L25.3 207.5M41.6 180.8L41.6 175.1M220.5 100.8L222.2 100.0L226.7 100.8L227.9 102.0L225.9 104.2L225.6 109.1L224.2 109.4L225.6 114.6L224.5 118.2M240.4 95.0L247.5 97.3L250.3 98.5L254.6 98.9M252.6 62.7L257.4 67.6L262.0 69.8L263.7 69.8L268.8 72.0L267.1 78.0L262.6 83.8L265.4 85.0L265.4 91.9L266.8 93.4M255.2 61.3L259.7 61.3L262.6 64.0L262.6 59.5L265.4 57.6L266.0 52.4M262.6 64.0L263.1 64.9L262.9 67.1L263.7 69.8M270.2 44.7L273.7 45.2M286.2 49.6L285.6 54.8L287.3 58.5L288.2 63.1L287.6 63.6L280.2 66.3L284.8 72.8L281.9 75.8L282.5 78.4L275.4 78.4L272.8 78.4L267.1 78.0M265.4 85.0L269.7 84.2L271.1 85.4L275.1 82.5L272.8 80.1L272.8 78.4M275.1 82.5L280.2 80.5L284.5 82.5L284.5 86.2M284.8 72.8L288.2 72.0L293.6 73.7L294.1 76.3L291.3 80.9L284.5 82.5M287.6 63.6L291.9 65.4L299.0 69.8L293.6 73.7M299.0 69.8L309.5 71.5L313.8 65.4L312.6 60.8L312.3 56.2L313.5 49.6L312.3 49.1L310.4 47.1L301.3 47.1M294.1 76.3L299.0 77.1L303.8 74.1L308.4 74.6L309.5 71.5M312.3 49.1L318.0 48.1L321.2 40.7L316.6 37.6L305.2 38.7M310.4 47.1L310.4 43.7L305.8 42.7M314.6 29.3L323.4 31.4L325.1 20.5M321.2 40.7L325.7 38.1L323.4 31.4M325.7 38.1L333.7 42.7L338.5 51.5L335.1 52.9L336.0 58.1L332.3 61.8L322.3 60.8L312.6 60.8M336.0 58.1L343.3 59.5L346.5 65.8L353.6 68.0L359.3 69.3L358.4 77.1L354.2 80.1M308.4 74.6L310.6 76.3L305.2 83.8L303.2 84.2L299.0 85.0L292.7 82.5L291.3 80.9M310.6 76.3L316.3 77.5L321.2 75.0L325.1 75.0L330.8 83.0L325.7 86.6L330.0 87.9M321.2 75.0L325.7 86.6M303.2 84.2L306.7 88.7L310.1 91.9L316.6 93.8L322.3 92.3L326.9 93.8M310.1 91.9L309.2 99.3L310.9 103.1L316.6 103.1L320.3 101.6L325.1 100.4M320.3 101.6L319.5 105.0M302.4 109.1L305.2 104.6L310.9 103.1M300.7 100.8L303.8 99.7L304.1 104.2L305.2 104.6M303.8 99.7L309.2 99.3M303.8 99.7L300.1 94.6L300.7 91.5L299.5 89.1L290.4 87.9L292.4 93.8L295.6 96.6L298.1 98.5M299.5 89.1L299.5 85.0M284.5 86.2L289.0 86.6L292.7 82.5M277.6 23.3L281.1 11.9L280.2 2.9L285.3 -9.9L288.2 -20.1M324.6 14.8L330.8 5.9L335.1 0.4L330.8 -9.9L328.0 -20.1M347.9 122.4L350.7 119.9L366.1 118.5L372.9 118.2L371.2 110.2L372.9 109.1M363.5 102.3L369.2 103.8L369.8 107.6L372.9 109.1L377.8 112.0L382.0 109.8L384.6 113.8M359.3 95.0L367.8 96.6L373.5 98.1L377.8 101.2L383.7 101.2M369.2 103.8L373.5 103.1L377.8 101.2M373.5 103.1L376.3 108.0L377.8 112.0M366.1 118.5L362.7 126.9L355.9 131.4L350.2 135.1L347.0 133.8M346.8 133.8L346.5 137.8L345.1 144.4M345.3 132.4L347.6 131.4L349.6 128.7L347.9 127.3M342.8 138.5L344.8 144.4M345.1 144.7L348.2 145.4L352.2 142.8L350.7 137.8L356.4 136.1L357.0 135.5L355.9 131.4M357.0 135.5L365.0 139.1L372.6 145.4L377.8 145.7L380.6 146.0L381.2 147.7M377.8 145.7L379.2 142.8L382.0 142.8M372.9 118.2L376.3 123.1L374.6 129.4L376.3 132.8L381.5 136.8L382.0 141.1L383.7 142.8M367.2 185.0L368.4 182.0L372.1 182.0L379.2 183.2L383.5 179.6L393.4 177.2L401.9 174.2L403.7 168.1L402.5 166.0L395.1 165.4L392.3 161.3M402.5 166.0L404.8 161.3L405.6 158.8M393.4 177.2L396.5 184.1M390.0 159.8L391.1 160.1M398.8 117.8L404.8 114.9L408.5 114.6L414.2 117.1L419.6 120.3L419.3 124.9L417.9 129.4L418.7 137.8L421.3 139.5L418.7 143.4L423.3 148.3L425.3 151.8L425.3 153.8L421.0 158.2M418.7 143.4L423.3 144.7L434.1 143.1L434.4 139.5L442.6 136.5L443.2 132.4L444.6 129.4L447.7 128.3L449.2 121.4L457.4 118.9M419.6 123.8L424.7 124.5L429.0 121.4L434.7 117.4L438.9 118.9L443.2 116.7L447.5 113.8L449.2 119.9L458.5 118.2M434.7 117.4L429.0 112.0L422.7 106.5L416.5 102.7L411.9 97.7L407.6 103.1L404.8 103.1L404.8 88.7L412.2 86.2L419.0 91.5L430.1 93.8L433.5 97.0L433.2 100.4L438.9 104.2L446.0 100.4L447.5 99.3M394.5 101.4L399.1 99.3L404.8 103.1M447.5 99.3L454.6 96.6L460.8 97.0L470.2 97.3L473.6 99.7L467.4 104.2L463.1 106.1L455.4 109.8L458.5 118.2M447.5 99.3L444.6 102.7L450.3 104.2L453.1 105.7L447.5 107.2L442.6 105.0L438.9 108.0L438.4 111.7L439.8 115.3L438.9 118.9M444.6 109.4L455.4 109.8M384.9 83.8L383.5 81.7L379.2 75.4L377.8 74.1L380.6 67.6L383.5 67.6L390.0 59.9L400.5 63.1L403.9 64.9L411.9 63.1L420.4 64.0L419.0 57.2L418.4 51.5L420.4 49.1L430.4 47.6L440.3 43.2L447.5 42.7L447.5 48.1L454.6 49.1L464.0 47.1L464.5 52.4L473.1 64.0L483.0 63.1L488.1 67.6L493.8 71.5M493.8 71.5L489.6 80.1L481.6 79.6L479.6 87.4L473.1 88.7L475.3 95.8L473.6 99.7M493.8 71.5L495.8 67.6L507.2 64.5L522.8 68.0L525.7 58.5L536.2 61.8L538.5 66.3L549.9 67.6L561.2 70.2L569.8 66.7L577.4 68.0M495.2 71.5L504.3 87.9L515.7 91.5L519.7 97.7L532.8 98.1L544.2 102.0L558.4 97.7L563.8 93.8L563.8 88.7L574.0 86.6L578.3 82.5L586.0 81.7L575.5 77.1L577.4 68.0L584.6 66.3L588.3 55.8L589.7 52.4L603.9 51.5M458.5 118.2L461.7 122.4L467.4 124.2L470.2 128.3L469.4 134.1L471.6 139.5L475.9 142.1L478.7 141.8L484.4 146.0L490.1 149.3L496.1 149.6L498.7 151.5L500.9 148.6L506.1 149.9L512.9 146.0L518.6 144.7L522.3 148.6M475.9 142.1L473.3 146.7L484.4 151.2L496.1 154.4L496.1 149.6M498.4 151.5L500.9 153.4L507.2 152.8L506.1 149.9M496.1 154.4L498.7 155.7L497.2 158.8L498.7 168.1M500.9 155.7L507.2 158.5L504.9 161.9L508.0 165.0L508.0 171.2M522.3 148.6L516.3 153.4L514.6 158.8L510.9 163.5L508.0 171.2M439.5 162.9L447.5 160.1L444.6 154.1L445.5 149.3L453.1 142.8L457.4 139.5L457.4 133.8L456.0 126.9L464.5 125.9M522.3 148.6L526.2 150.9L525.7 157.2L522.8 161.9L527.1 165.0L528.5 168.1L533.4 170.6L530.2 173.3L524.3 175.1L523.4 180.2L526.0 185.6L524.8 189.1L527.7 196.5L526.2 202.8M533.4 170.6L536.2 166.9L539.9 166.0L545.0 164.1L549.0 165.7L549.9 169.0L552.7 169.7M536.2 166.9L538.5 171.8L542.7 173.0L541.3 175.7L544.7 179.0L548.4 183.2L551.3 187.7L551.3 190.0L551.3 197.0L546.7 198.8L547.0 200.8L542.7 202.6M530.2 173.3L531.4 175.7L533.4 175.7L533.4 181.7L535.6 179.6L539.9 179.0L543.3 182.0L543.6 185.3L545.9 187.7L545.6 190.9L551.3 190.0M538.2 198.8L536.5 193.2L538.5 191.2L545.6 190.9M530.2 213.8L533.1 216.1L535.9 214.6M557.3 226.6L559.8 229.7L564.1 228.3L569.8 228.0L572.6 225.2L574.0 220.1L579.7 220.3" fill="none" stroke="#c9a0c9" stroke-opacity=".75" stroke-width=".7" stroke-linejoin="round"/>
<path d="M328.0 103.5L325.1 100.8L324.3 97.7L325.1 95.0L326.9 93.4L327.4 90.3L330.0 87.9L332.8 83.0L336.0 82.1L337.9 84.2L340.8 84.6L338.2 87.0L340.8 90.3L343.1 90.9L346.2 88.7L349.3 88.3L350.7 88.3L353.0 89.9L358.4 94.6L363.5 98.5L364.1 102.0L359.3 104.2L355.0 104.4L349.3 103.1L345.1 100.4L339.4 100.4L335.1 103.5L330.8 103.7ZM345.1 85.0L345.1 83.4L349.3 81.5L353.6 80.1L357.3 79.6L354.2 82.1L352.7 85.4L350.2 87.0L349.0 87.0L346.2 87.4ZM322.3 106.1L323.7 104.2L328.0 104.6L329.4 105.4L328.0 106.5L324.3 106.7ZM379.2 88.7L380.6 84.6L384.9 82.1L390.6 80.5L396.3 81.7L396.3 87.4L391.4 88.7L390.6 90.7L388.6 91.5L390.6 95.8L394.8 97.7L395.7 102.3L398.5 102.0L400.0 103.5L396.0 105.0L396.3 108.0L397.7 110.9L398.5 117.8L396.3 119.2L392.0 119.9L387.7 117.8L384.9 116.7L384.6 113.8L385.4 110.6L386.3 106.8L388.6 106.5L385.4 103.1L383.5 100.4L380.9 96.6L380.6 92.6L378.3 90.3ZM330.8 14.8L332.3 10.1L335.1 7.7L339.4 11.9L338.8 16.0L335.1 18.0ZM-16.2 72.8L-6.2 73.7L-0.5 76.7L4.3 80.5L4.9 82.5L-2.0 82.5L-7.7 81.3L-16.2 81.7ZM-4.8 100.4L-2.5 102.0L0.0 99.3L0.0 92.6L3.7 85.4L-0.5 85.4L-4.0 90.7L-4.5 96.6ZM4.9 84.6L8.0 85.0L13.7 84.6L17.9 86.6L17.9 90.3L14.2 90.3L13.1 95.4L10.8 96.2L7.4 93.8L8.6 89.1L4.9 85.8Z" fill="#aad3df"/>
<g>
<circle cx="-12.0" cy="186.0" r="14.2" fill="#8c8c8c" fill-opacity=".72" stroke="#8c8c8c" stroke-opacity=".45" stroke-width="1"/>
<circle cx="6.5" cy="203.5" r="14.2" fill="#00e400" fill-opacity=".72" stroke="#00e400" stroke-opacity=".45" stroke-width="1"/>
<circle cx="49.4" cy="197.4" r="14.2" fill="#8c8c8c" fill-opacity=".72" stroke="#8c8c8c" stroke-opacity=".45" stroke-width="1"/>
<circle cx="35.5" cy="219.3" r="14.2" fill="#00e400" fill-opacity=".72" stroke="#00e400" stroke-opacity=".45" stroke-width="1"/>
<circle cx="27.4" cy="267.0" r="14.2" fill="#ffff00" fill-opacity=".72" stroke="#ffff00" stroke-opacity=".45" stroke-width="1"/>
<circle cx="80.8" cy="337.5" r="14.2" fill="#8c8c8c" fill-opacity=".72" stroke="#8c8c8c" stroke-opacity=".45" stroke-width="1"/>
<circle cx="223.0" cy="196.7" r="14.2" fill="#ffff00" fill-opacity=".72" stroke="#ffff00" stroke-opacity=".45" stroke-width="1"/>
<circle cx="254.1" cy="119.3" r="14.2" fill="#ff7e00" fill-opacity=".72" stroke="#ff7e00" stroke-opacity=".45" stroke-width="1"/>
<circle cx="307.0" cy="97.5" r="14.2" fill="#ffff00" fill-opacity=".72" stroke="#ffff00" stroke-opacity=".45" stroke-width="1"/>
<circle cx="298.5" cy="93.0" r="14.2" fill="#4c0026" fill-opacity=".72" stroke="#4c0026" stroke-opacity=".45" stroke-width="1"/>
<circle cx="347.5" cy="136.5" r="14.2" fill="#ffff00" fill-opacity=".72" stroke="#ffff00" stroke-opacity=".45" stroke-width="1"/>
<circle cx="382.0" cy="145.5" r="14.2" fill="#ff7e00" fill-opacity=".72" stroke="#ff7e00" stroke-opacity=".45" stroke-width="1"/>
<circle cx="372.0" cy="130.7" r="14.2" fill="#8c8c8c" fill-opacity=".72" stroke="#8c8c8c" stroke-opacity=".45" stroke-width="1"/>
<circle cx="400.0" cy="160.5" r="14.2" fill="#00e400" fill-opacity=".72" stroke="#00e400" stroke-opacity=".45" stroke-width="1"/>
<circle cx="402.0" cy="158.0" r="14.2" fill="#ffff00" fill-opacity=".72" stroke="#ffff00" stroke-opacity=".45" stroke-width="1"/>
<circle cx="388.0" cy="155.0" r="14.2" fill="#ff0000" fill-opacity=".72" stroke="#ff0000" stroke-opacity=".45" stroke-width="1"/>
<circle cx="388.0" cy="155.0" r="14.2" fill="#ff0000" fill-opacity=".72" stroke="#ff0000" stroke-opacity=".45" stroke-width="1"/>
<circle cx="411.0" cy="115.0" r="14.2" fill="#ffff00" fill-opacity=".72" stroke="#ffff00" stroke-opacity=".45" stroke-width="1"/>
<circle cx="355.8" cy="206.0" r="14.2" fill="#00e400" fill-opacity=".72" stroke="#00e400" stroke-opacity=".45" stroke-width="1"/>
<circle cx="355.8" cy="206.0" r="14.2" fill="#8c8c8c" fill-opacity=".72" stroke="#8c8c8c" stroke-opacity=".45" stroke-width="1"/>
<circle cx="338.0" cy="231.4" r="14.2" fill="#ff0000" fill-opacity=".72" stroke="#ff0000" stroke-opacity=".45" stroke-width="1"/>
<circle cx="445.0" cy="62.5" r="14.2" fill="#00e400" fill-opacity=".72" stroke="#00e400" stroke-opacity=".45" stroke-width="1"/>
<circle cx="443.0" cy="127.0" r="14.2" fill="#8c8c8c" fill-opacity=".72" stroke="#8c8c8c" stroke-opacity=".45" stroke-width="1"/>
<circle cx="454.5" cy="127.0" r="14.2" fill="#ff7e00" fill-opacity=".72" stroke="#ff7e00" stroke-opacity=".45" stroke-width="1"/>
<circle cx="450.5" cy="128.0" r="14.2" fill="#ff7e00" fill-opacity=".72" stroke="#ff7e00" stroke-opacity=".45" stroke-width="1"/>
<circle cx="457.0" cy="136.5" r="14.2" fill="#99004c" fill-opacity=".72" stroke="#99004c" stroke-opacity=".45" stroke-width="1"/>
<circle cx="465.5" cy="147.0" r="14.2" fill="#ff0000" fill-opacity=".72" stroke="#ff0000" stroke-opacity=".45" stroke-width="1"/>
<circle cx="443.0" cy="102.3" r="14.2" fill="#ff0000" fill-opacity=".72" stroke="#ff0000" stroke-opacity=".45" stroke-width="1"/>
<circle cx="442.0" cy="113.3" r="14.2" fill="#ff0000" fill-opacity=".72" stroke="#ff0000" stroke-opacity=".45" stroke-width="1"/>
<circle cx="458.0" cy="97.3" r="14.2" fill="#ffff00" fill-opacity=".72" stroke="#ffff00" stroke-opacity=".45" stroke-width="1"/>
<circle cx="503.0" cy="159.5" r="14.2" fill="#99004c" fill-opacity=".72" stroke="#99004c" stroke-opacity=".45" stroke-width="1"/>
<circle cx="488.0" cy="150.0" r="14.2" fill="#ff0000" fill-opacity=".72" stroke="#ff0000" stroke-opacity=".45" stroke-width="1"/>
<circle cx="496.5" cy="166.3" r="14.2" fill="#4c0026" fill-opacity=".72" stroke="#4c0026" stroke-opacity=".45" stroke-width="1"/>
<circle cx="436.5" cy="159.0" r="14.2" fill="#ff0000" fill-opacity=".72" stroke="#ff0000" stroke-opacity=".45" stroke-width="1"/>
<circle cx="453.0" cy="176.5" r="14.2" fill="#ff0000" fill-opacity=".72" stroke="#ff0000" stroke-opacity=".45" stroke-width="1"/>
<circle cx="474.0" cy="193.7" r="14.2" fill="#ffff00" fill-opacity=".72" stroke="#ffff00" stroke-opacity=".45" stroke-width="1"/>
<circle cx="469.5" cy="181.2" r="14.2" fill="#ff7e00" fill-opacity=".72" stroke="#ff7e00" stroke-opacity=".45" stroke-width="1"/>
<circle cx="472.5" cy="212.3" r="14.2" fill="#ff7e00" fill-opacity=".72" stroke="#ff7e00" stroke-opacity=".45" stroke-width="1"/>
<circle cx="549.5" cy="76.2" r="14.2" fill="#4c0026" fill-opacity=".72" stroke="#4c0026" stroke-opacity=".45" stroke-width="1"/>
<circle cx="576.5" cy="108.5" r="14.2" fill="#ffff00" fill-opacity=".72" stroke="#ffff00" stroke-opacity=".45" stroke-width="1"/>
<circle cx="597.5" cy="99.5" r="14.2" fill="#ff0000" fill-opacity=".72" stroke="#ff0000" stroke-opacity=".45" stroke-width="1"/>
<circle cx="590.5" cy="138.3" r="14.2" fill="#00e400" fill-opacity=".72" stroke="#00e400" stroke-opacity=".45" stroke-width="1"/>
<circle cx="541.5" cy="140.0" r="14.2" fill="#ff7e00" fill-opacity=".72" stroke="#ff7e00" stroke-opacity=".45" stroke-width="1"/>
<circle cx="568.0" cy="164.0" r="14.2" fill="#ff7e00" fill-opacity=".72" stroke="#ff7e00" stroke-opacity=".45" stroke-width="1"/>
<circle cx="546.5" cy="171.5" r="14.2" fill="#ff7e00" fill-opacity=".72" stroke="#ff7e00" stroke-opacity=".45" stroke-width="1"/>
<circle cx="518.5" cy="183.0" r="14.2" fill="#ff7e00" fill-opacity=".72" stroke="#ff7e00" stroke-opacity=".45" stroke-width="1"/>
<circle cx="538.0" cy="180.0" r="14.2" fill="#ff0000" fill-opacity=".72" stroke="#ff0000" stroke-opacity=".45" stroke-width="1"/>
<circle cx="548.5" cy="201.0" r="14.2" fill="#ff0000" fill-opacity=".72" stroke="#ff0000" stroke-opacity=".45" stroke-width="1"/>
<circle cx="549.0" cy="249.7" r="14.2" fill="#ff0000" fill-opacity=".72" stroke="#ff0000" stroke-opacity=".45" stroke-width="1"/>
<circle cx="549.0" cy="249.7" r="14.2" fill="#ff0000" fill-opacity=".72" stroke="#ff0000" stroke-opacity=".45" stroke-width="1"/>
</g>
<g font-family="Liberation Sans,Arial,sans-serif" font-weight="bold" font-size="12" text-anchor="middle" fill="#000" stroke="#fff" stroke-width="3.2" paint-order="stroke" stroke-linejoin="round">
<text x="6.5" y="206.5">35</text>
<text x="49.4" y="200.4">N/A</text>
<text x="35.5" y="222.3">14</text>
<text x="27.4" y="270.0">70</text>
<text x="80.8" y="340.5">N/A</text>
<text x="223.0" y="199.7">97</text>
<text x="254.1" y="122.3">125</text>
<text x="307.0" y="100.5">67</text>
<text x="298.5" y="96.0">378</text>
<text x="347.5" y="139.5">56</text>
<text x="382.0" y="148.5">141</text>
<text x="372.0" y="133.7">N/A</text>
<text x="400.0" y="163.5">33</text>
<text x="402.0" y="161.0">55</text>
<text x="388.0" y="158.0">157</text>
<text x="411.0" y="118.0">80</text>
<text x="355.8" y="209.0">N/A</text>
<text x="338.0" y="234.4">162</text>
<text x="443.0" y="130.0">N/A</text>
<text x="454.5" y="130.0">151</text>
<text x="450.5" y="131.0">115</text>
<text x="457.0" y="139.5">222</text>
<text x="465.5" y="150.0">196</text>
<text x="443.0" y="105.3">172</text>
<text x="442.0" y="116.3">162</text>
<text x="458.0" y="100.3">93</text>
<text x="503.0" y="162.5">360</text>
<text x="488.0" y="153.0">176</text>
<text x="496.5" y="169.3">329</text>
<text x="436.5" y="162.0">152</text>
<text x="453.0" y="179.5">152</text>
<text x="474.0" y="196.7">100</text>
<text x="469.5" y="184.2">106</text>
<text x="472.5" y="215.3">140</text>
<text x="549.5" y="79.2">316</text>
<text x="576.5" y="111.5">56</text>
<text x="590.5" y="141.3">35</text>
<text x="541.5" y="143.0">139</text>
<text x="568.0" y="167.0">134</text>
<text x="546.5" y="174.5">107</text>
<text x="518.5" y="186.0">143</text>
<text x="538.0" y="183.0">155</text>
<text x="548.5" y="204.0">177</text>
<text x="549.0" y="252.7">152</text>
</g>
</svg>
<div id="pop" class="abs">
<div class="tip abs"></div>
<table cellspacing="0"><tr><th style="width:73px">Pollutant</th><th style="width:43px">AQI</th></tr><tr><td>PM2.5</td><td style="background:#ff0;border-left:1px solid #034a85;color:#222">93</td></tr></table>
</div>
</div>

<div class="ph f abs" style="top:2px">Select a City</div>
<div class="sel abs" style="top:40px">Bishkek<span class="x">×</span><span class="c"></span></div>
<div class="ph abs" style="top:92px;width:277px">Select a Parameter</div>
<div class="sel abs" style="top:129px">PM2.5<span class="x">×</span><span class="c"></span></div>

<div id="city" class="abs"><b>Bishkek</b>
<svg class="abs" style="left:231px;top:25px" width="35" height="35" viewBox="0 0 35 35">
<rect width="35" height="35" fill="#f2b23a"/>
<circle cx="7.600" cy="26.900" r="3.700" fill="#fff"/>
<path d="M4 15.200a15.200 15.200 0 0 1 15.200 15.200" fill="none" stroke="#fff" stroke-width="5.200"/>
<path d="M4 5.900a24.500 24.500 0 0 1 24.500 24.500" fill="none" stroke="#fff" stroke-width="4.900"/>
</svg>
</div>

<div id="note" class="abs">Note: Values above 500 are considered Beyond the AQI.<br>Follow recommendations for the Hazardous category.<br>Additional information on reducing exposure to extremely<br>high levels of particle pollution is available <a>here</a>.</div>

<div id="t1" class="tab abs">AQI</div>
<div id="t2" class="tab abs">Concentration</div>
<div id="t3" class="tab abs">Historical</div>
<div id="tline" class="abs"></div>
<div id="learn" class="abs">Learn more about how the Air Quality Index [AQI] is calculated from the EPA <a>here</a>.</div>

<svg class="abs" style="left:0;top:540px" width="690" height="331" viewBox="0 540 690 331" font-family="DejaVu Sans,Verdana,sans-serif">
<text x="345" y="577" font-size="17.5" text-anchor="middle" fill="#333">Bishkek – PM2.5</text>
<path d="M84.2 800.5H671.2" stroke="#c0d0e0" stroke-width="1"/>
<text x="70" y="803.3" font-size="10.6" text-anchor="end" fill="#222">0</text>
<path d="M84.2 763.5H671.2" stroke="#d8d8d8" stroke-width="1"/>
<text x="70" y="766.3" font-size="10.6" text-anchor="end" fill="#222">100</text>
<path d="M84.2 726.5H671.2" stroke="#d8d8d8" stroke-width="1"/>
<text x="70" y="729.3" font-size="10.6" text-anchor="end" fill="#222">200</text>
<path d="M84.2 689.5H671.2" stroke="#d8d8d8" stroke-width="1"/>
<text x="70" y="692.3" font-size="10.6" text-anchor="end" fill="#222">300</text>
<path d="M84.2 652.5H671.2" stroke="#d8d8d8" stroke-width="1"/>
<text x="70" y="655.3" font-size="10.6" text-anchor="end" fill="#222">400</text>
<path d="M84.2 615.5H671.2" stroke="#d8d8d8" stroke-width="1"/>
<text x="70" y="618.3" font-size="10.6" text-anchor="end" fill="#222">500</text>
<text transform="translate(39.3,706.5) rotate(-90)" font-size="10.5" text-anchor="middle" fill="#222">AQI</text>
<rect x="90.5" y="768.5" width="12" height="32.0" fill="#ffff00" stroke="#000" stroke-width="1"/>
<rect x="115.5" y="752.5" width="12" height="48.0" fill="#ff7e00" stroke="#000" stroke-width="1"/>
<rect x="139.5" y="758.5" width="12" height="42.0" fill="#ff7e00" stroke="#000" stroke-width="1"/>
<rect x="163.5" y="749.5" width="12" height="51.0" fill="#ff7e00" stroke="#000" stroke-width="1"/>
<rect x="188.5" y="739.5" width="12" height="61.0" fill="#ff0000" stroke="#000" stroke-width="1"/>
<rect x="212.5" y="742.5" width="12" height="58.0" fill="#ff0000" stroke="#000" stroke-width="1"/>
<rect x="237.5" y="742.5" width="12" height="58.0" fill="#ff0000" stroke="#000" stroke-width="1"/>
<rect x="261.5" y="748.5" width="12" height="52.0" fill="#ff7e00" stroke="#000" stroke-width="1"/>
<rect x="286.5" y="755.5" width="12" height="45.0" fill="#ff7e00" stroke="#000" stroke-width="1"/>
<rect x="310.5" y="759.5" width="12" height="41.0" fill="#ff7e00" stroke="#000" stroke-width="1"/>
<rect x="334.5" y="752.5" width="12" height="48.0" fill="#ff7e00" stroke="#000" stroke-width="1"/>
<rect x="359.5" y="741.5" width="12" height="59.0" fill="#ff0000" stroke="#000" stroke-width="1"/>
<rect x="383.5" y="748.5" width="12" height="52.0" fill="#ff7e00" stroke="#000" stroke-width="1"/>
<rect x="408.5" y="746.5" width="12" height="54.0" fill="#ff7e00" stroke="#000" stroke-width="1"/>
<rect x="432.5" y="744.5" width="12" height="56.0" fill="#ff0000" stroke="#000" stroke-width="1"/>
<rect x="457.5" y="742.5" width="12" height="58.0" fill="#ff0000" stroke="#000" stroke-width="1"/>
<rect x="481.5" y="742.5" width="12" height="58.0" fill="#ff0000" stroke="#000" stroke-width="1"/>
<rect x="505.5" y="742.5" width="12" height="58.0" fill="#ff0000" stroke="#000" stroke-width="1"/>
<rect x="530.5" y="742.5" width="12" height="58.0" fill="#ff0000" stroke="#000" stroke-width="1"/>
<rect x="554.5" y="749.5" width="12" height="51.0" fill="#ff7e00" stroke="#000" stroke-width="1"/>
<rect x="579.5" y="754.5" width="12" height="46.0" fill="#ff7e00" stroke="#000" stroke-width="1"/>
<rect x="603.5" y="752.5" width="12" height="48.0" fill="#ff7e00" stroke="#000" stroke-width="1"/>
<rect x="628.5" y="758.5" width="12" height="42.0" fill="#ff7e00" stroke="#000" stroke-width="1"/>
<rect x="652.5" y="766.5" width="12" height="34.0" fill="#ffff00" stroke="#000" stroke-width="1"/>
<path d="M84.5 800.5v9.5" stroke="#c0d0e0" stroke-width="1"/>
<path d="M109.5 800.5v9.5" stroke="#c0d0e0" stroke-width="1"/>
<path d="M133.5 800.5v9.5" stroke="#c0d0e0" stroke-width="1"/>
<path d="M157.5 800.5v9.5" stroke="#c0d0e0" stroke-width="1"/>
<path d="M182.5 800.5v9.5" stroke="#c0d0e0" stroke-width="1"/>
<path d="M206.5 800.5v9.5" stroke="#c0d0e0" stroke-width="1"/>
<path d="M231.5 800.5v9.5" stroke="#c0d0e0" stroke-width="1"/>
<path d="M255.5 800.5v9.5" stroke="#c0d0e0" stroke-width="1"/>
<path d="M280.5 800.5v9.5" stroke="#c0d0e0" stroke-width="1"/>
<path d="M304.5 800.5v9.5" stroke="#c0d0e0" stroke-width="1"/>
<path d="M328.5 800.5v9.5" stroke="#c0d0e0" stroke-width="1"/>
<path d="M353.5 800.5v9.5" stroke="#c0d0e0" stroke-width="1"/>
<path d="M377.5 800.5v9.5" stroke="#c0d0e0" stroke-width="1"/>
<path d="M402.5 800.5v9.5" stroke="#c0d0e0" stroke-width="1"/>
<path d="M426.5 800.5v9.5" stroke="#c0d0e0" stroke-width="1"/>
<path d="M451.5 800.5v9.5" stroke="#c0d0e0" stroke-width="1"/>
<path d="M475.5 800.5v9.5" stroke="#c0d0e0" stroke-width="1"/>
<path d="M499.5 800.5v9.5" stroke="#c0d0e0" stroke-width="1"/>
<path d="M524.5 800.5v9.5" stroke="#c0d0e0" stroke-width="1"/>
<path d="M548.5 800.5v9.5" stroke="#c0d0e0" stroke-width="1"/>
<path d="M573.5 800.5v9.5" stroke="#c0d0e0" stroke-width="1"/>
<path d="M597.5 800.5v9.5" stroke="#c0d0e0" stroke-width="1"/>
<path d="M622.5 800.5v9.5" stroke="#c0d0e0" stroke-width="1"/>
<path d="M646.5 800.5v9.5" stroke="#c0d0e0" stroke-width="1"/>
<path d="M670.5 800.5v9.5" stroke="#c0d0e0" stroke-width="1"/>
<text transform="translate(99.0,815.7) rotate(-45)" font-size="10.5" text-anchor="end" fill="#666">9 AM</text>
<text transform="translate(123.4,815.7) rotate(-45)" font-size="10.5" text-anchor="end" fill="#666">10 AM</text>
<text transform="translate(147.9,815.7) rotate(-45)" font-size="10.5" text-anchor="end" fill="#666">11 AM</text>
<text transform="translate(172.3,815.7) rotate(-45)" font-size="10.5" text-anchor="end" fill="#666">12 PM</text>
<text transform="translate(196.7,815.7) rotate(-45)" font-size="10.5" text-anchor="end" fill="#666">1 PM</text>
<text transform="translate(221.1,815.7) rotate(-45)" font-size="10.5" text-anchor="end" fill="#666">2 PM</text>
<text transform="translate(245.6,815.7) rotate(-45)" font-size="10.5" text-anchor="end" fill="#666">3 PM</text>
<text transform="translate(270.0,815.7) rotate(-45)" font-size="10.5" text-anchor="end" fill="#666">4 PM</text>
<text transform="translate(294.4,815.7) rotate(-45)" font-size="10.5" text-anchor="end" fill="#666">5 PM</text>
<text transform="translate(318.8,815.7) rotate(-45)" font-size="10.5" text-anchor="end" fill="#666">6 PM</text>
<text transform="translate(343.3,815.7) rotate(-45)" font-size="10.5" text-anchor="end" fill="#666">7 PM</text>
<text transform="translate(367.7,815.7) rotate(-45)" font-size="10.5" text-anchor="end" fill="#666">8 PM</text>
<text transform="translate(392.1,815.7) rotate(-45)" font-size="10.5" text-anchor="end" fill="#666">9 PM</text>
<text transform="translate(416.5,815.7) rotate(-45)" font-size="10.5" text-anchor="end" fill="#666">10 PM</text>
<text transform="translate(441.0,815.7) rotate(-45)" font-size="10.5" text-anchor="end" fill="#666">11 PM</text>
<text transform="translate(465.4,815.7) rotate(-45)" font-size="10.5" text-anchor="end" fill="#666">Jan 16, 2020 12 AM</text>
<text transform="translate(489.8,815.7) rotate(-45)" font-size="10.5" text-anchor="end" fill="#666">1 AM</text>
<text transform="translate(514.2,815.7) rotate(-45)" font-size="10.5" text-anchor="end" fill="#666">2 AM</text>
<text transform="translate(538.7,815.7) rotate(-45)" font-size="10.5" text-anchor="end" fill="#666">3 AM</text>
<text transform="translate(563.1,815.7) rotate(-45)" font-size="10.5" text-anchor="end" fill="#666">4 AM</text>
<text transform="translate(587.5,815.7) rotate(-45)" font-size="10.5" text-anchor="end" fill="#666">5 AM</text>
<text transform="translate(611.9,815.7) rotate(-45)" font-size="10.5" text-anchor="end" fill="#666">6 AM</text>
<text transform="translate(636.4,815.7) rotate(-45)" font-size="10.5" text-anchor="end" fill="#666">7 AM</text>
<text transform="translate(660.8,815.7) rotate(-45)" font-size="10.5" text-anchor="end" fill="#666">8 AM</text>
</svg>

<div id="cc" class="abs">
<div class="h abs"><div style="font-size:15px;line-height:18px;margin-top:7px">Current Conditions</div><div style="font-size:12px;line-height:18px">observed at</div><div style="font-size:15px;line-height:20px">Jan 16, 2020 8:00 AM (LT)</div></div>
<div class="y abs">93 AQI<br>Moderate<br>PM2.5</div>
<div class="hm abs">Health Message</div>
<div class="p abs">The AQI is between 51 and 100. Air<br>quality is acceptable; however,<br>pollution in this range may pose a<br>moderate health concern for a very<br>small number of individuals. People<br>who are unusually sensitive to<br>ozone or particle pollution may</div>
</div>
</body>
</html>
